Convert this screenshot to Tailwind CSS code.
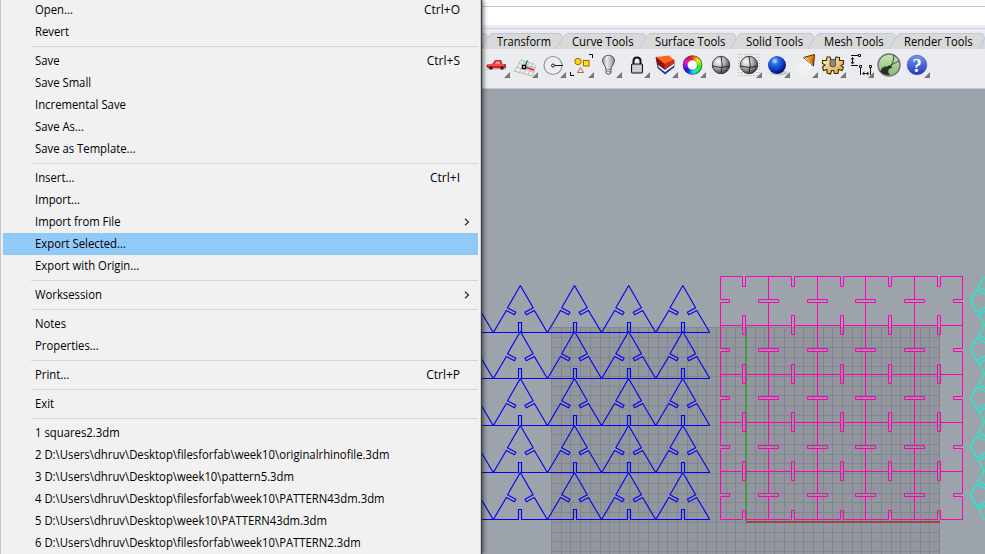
<!DOCTYPE html>
<html lang="en">
<head>
<meta charset="utf-8">
<title>Rhinoceros</title>
<script src="https://cdn.jsdelivr.net/npm/@tailwindcss/browser@4"></script>
</head>
<body class="w-[985px] h-[554px] overflow-hidden bg-[#9da3aa] font-['Open_Sans','Noto_Sans',sans-serif] text-[12px] text-black">
<div class="flex w-[985px] h-[554px] overflow-hidden">

  <nav class="relative z-10 w-[481px] h-[554px] shrink-0 bg-[#f1f1f1] border-l border-[#c3c3c3] border-r border-r-[#d0d0d0] shadow-[1px_0_1px_#3c4044,3px_0_4px_rgba(0,0,0,0.45)]">
    <ul id="menu" class="-mt-px flex flex-col pl-[2px] pr-[2px]"></ul>
  </nav>

  <main class="flex flex-col w-[504px] shrink-0">
    <div class="h-[6px] bg-white"></div>
    <div class="h-[19px] bg-white border-t border-[#bcc3d6]"></div>
    <div class="h-[3px] bg-[#ebecf0]"></div>
    <div class="relative h-[21px] bg-[#ebecf0] border-t border-[#cfd2e2]">
      <svg class="absolute left-0 -top-px" width="504" height="21" viewBox="481 28 504 21" fill="#d9d9d9" stroke="#bfc7da">
        <path d="M470 50V33.500H484Q487 33.500 487 37V50"/>
        <path d="M480 50L489 36Q490.500 33.500 493 33.500H559Q562 33.500 562 37V50"/>
        <path d="M555 50L564 36Q565.500 33.500 568 33.500H642Q645 33.500 645 37V50"/>
        <path d="M638 50L647 36Q648.500 33.500 651 33.500H732Q735.500 33.500 735.500 37V50"/>
        <path d="M729 50L738 36Q739.500 33.500 742 33.500H810Q813.500 33.500 813.500 37V50"/>
        <path d="M807 50L816 36Q817.500 33.500 820 33.500H892Q895 33.500 895 37V50"/>
        <path d="M888 50L897 36Q898.500 33.500 901 33.500H981Q984 33.500 984 37V50"/>
        <path d="M978 50L986 36"/>
      </svg>
      <div class="relative flex h-full items-end whitespace-nowrap leading-[14px] pl-[16px]">
        <div class="w-[75px]"><span class="inline-block origin-left scale-x-[0.92]">Transform</span></div>
        <div class="w-[83px]"><span class="inline-block origin-left scale-x-[0.94]">Curve Tools</span></div>
        <div class="w-[91px]"><span class="inline-block origin-left scale-x-[0.94]">Surface Tools</span></div>
        <div class="w-[78px]"><span class="inline-block origin-left scale-x-[0.95]">Solid Tools</span></div>
        <div class="w-[80px]"><span class="inline-block origin-left scale-x-[0.94]">Mesh Tools</span></div>
        <div class="w-[80px]"><span class="inline-block origin-left scale-x-[0.935]">Render Tools</span></div>
      </div>
    </div>
    <div class="flex h-[40px] bg-[#ebecf0] border-b border-[#bfc6d8] pl-px pt-px">
      <svg class="absolute w-0 h-0"><defs>
        <radialGradient id="gry" cx=".35" cy=".3" r=".75"><stop offset="0" stop-color="#fff"/><stop offset=".4" stop-color="#c4c4c4"/><stop offset="1" stop-color="#3a3a3a"/></radialGradient>
        <radialGradient id="blu" cx=".38" cy=".28" r=".75"><stop offset="0" stop-color="#d8ecff"/><stop offset=".25" stop-color="#2f74ea"/><stop offset=".65" stop-color="#0b3bbd"/><stop offset="1" stop-color="#020a50"/></radialGradient>
        <linearGradient id="hlp" x2="0" y2="1"><stop offset="0" stop-color="#7396f0"/><stop offset="1" stop-color="#2437bd"/></linearGradient>
        <linearGradient id="gld" x2="1" y2="1"><stop offset="0" stop-color="#fff3b8"/><stop offset="1" stop-color="#d9a23c"/></linearGradient>
        <linearGradient id="org" x2="1" y2=".6"><stop offset="0" stop-color="#ffc35a"/><stop offset=".6" stop-color="#f48a10"/><stop offset="1" stop-color="#a85500"/></linearGradient>
        <linearGradient id="blb" x2="1" y2="0"><stop offset="0" stop-color="#8a8a8a"/><stop offset=".35" stop-color="#eee"/><stop offset="1" stop-color="#888"/></linearGradient>
        <linearGradient id="grn" x2="0" y2="1"><stop offset="0" stop-color="#cbe6b8"/><stop offset="1" stop-color="#86b878"/></linearGradient>
        <linearGradient id="beam" x1="1" y1="0" x2="0" y2="1"><stop offset="0" stop-color="#fff"/><stop offset="1" stop-color="#ebecf0"/></linearGradient>
      </defs></svg>
      <!-- car -->
      <svg width="28" height="38" viewBox="0 50 28 38"><path d="M1 69.500H24" stroke="#d3d3d3"/><path d="M5 65L11 64L13 60.500H19L20 64.500H23.500V68H6Q4.500 67 5 65Z" fill="#e52222" stroke="#9d1212" stroke-width=".7"/><path d="M13 64L14 61.500H18V64Z" fill="#ff9a92"/><path d="M6 65H22" stroke="#ff756b"/><circle cx="9" cy="68" r="1.800" fill="#222"/><circle cx="20" cy="68" r="1.800" fill="#222"/><path d="M28 72V78H22Z" fill="#777"/></svg>
      <!-- construction plane -->
      <svg width="28" height="38" viewBox="0 50 28 38" fill="none"><path d="M11 60L24 64M9 63.500L26 68M7 67.500L25 72M4 71L22 76M11 60L4 72M15 61L9 73M19 62L13 74.500M23 63L18 75M26 65L22 76" stroke="#b6b6b6" stroke-width=".9"/><path d="M15 66L17.500 60.500" stroke="#15902a" stroke-width="1.400"/><path d="M15 67L24 70" stroke="#d52020" stroke-width="1.400"/><rect x="12.500" y="65.500" width="3" height="3" fill="#fff" stroke="#000" stroke-width="1.300"/><path d="M28 72V78H22Z" fill="#777"/></svg>
      <!-- circle -->
      <svg width="28" height="38" viewBox="0 50 28 38" fill="none"><circle cx="15" cy="65.500" r="9" stroke="#929292" stroke-width="1.100"/><path d="M15 65.500H25" stroke="#111"/><circle cx="15" cy="65.500" r="1.500" fill="#fff" stroke="#111"/><path d="M28 72V78H22Z" fill="#777"/></svg>
      <!-- selection -->
      <svg width="28" height="38" viewBox="0 50 28 38" fill="none"><path d="M23 54.500H26.500V58M4.500 72V75.500H8" stroke="#000"/><circle cx="12" cy="61.500" r="3.200" fill="#ffd800" stroke="#9a6a00"/><rect x="17.500" y="60.500" width="5.500" height="5.500" fill="#ffe600" stroke="#9a6a00"/><path d="M14.500 67.500L17.500 72.500H11.500Z" stroke="#a86a42"/><path d="M28 72V78H22Z" fill="#777"/></svg>
      <!-- bulb -->
      <svg width="28" height="38" viewBox="0 50 28 38"><path d="M12 69Q12 67 9.500 64Q7 60 10 57Q14.500 53.500 19 57Q22 60 19.500 64Q17 67 17 69V73Q14.500 76 12 73Z" fill="url(#blb)" stroke="#555" stroke-width="1"/><path d="M12 69.500H17M12 71.500H17" stroke="#777" stroke-width=".7"/><path d="M28 72V78H22Z" fill="#777"/></svg>
      <!-- lock -->
      <svg width="28" height="38" viewBox="0 50 28 38"><path d="M11.500 65V61Q11.500 57.500 15 57.500T18.500 61V65" fill="none" stroke="#111" stroke-width="2"/><rect x="9.500" y="64" width="11" height="9" rx=".5" fill="#bdbdbd" stroke="#111"/><path d="M11 66.500H19M11 68.500H19M11 70.500H19" stroke="#eee" stroke-width=".8"/><path d="M28 72V78H22Z" fill="#777"/></svg>
      <!-- layers -->
      <svg width="28" height="38" viewBox="0 50 28 38" stroke-linejoin="round"><path d="M6 57L14 63L24 60V67L15 74L8 68Z" fill="#1c3f9c" stroke="#1a2650" stroke-width=".8"/><path d="M8 64L15 70L24 63.500V65.500L15 72L8.500 67Z" fill="#fff"/><path d="M6 57L14.500 63V69.500L7.500 64.500Z" fill="#8a1008"/><path d="M6 57L19 55.500L24 60L14.500 64Z" fill="#ff6420"/><path d="M14.500 64L24 60V63.500L14.500 69.500Z" fill="#d92a12"/><path d="M28 72V78H22Z" fill="#777"/></svg>
      <!-- colour wheel -->
      <svg width="28" height="38" viewBox="0 50 28 38"><g fill="none" stroke-width="4"><circle cx="14.500" cy="65" r="8.600" stroke="#444" stroke-width="2.500"/><g id="wheel"></g></g><circle cx="14.500" cy="65" r="5" fill="#fff" stroke="#555" stroke-width=".6"/><path d="M28 72V78H22Z" fill="#777"/></svg>
      <!-- shaded sphere -->
      <svg width="28" height="38" viewBox="0 50 28 38"><circle cx="15" cy="65" r="8.700" fill="url(#gry)" stroke="#333" stroke-width=".9"/><path d="M6.500 66Q15 69 23.500 66M15 56.500Q17.500 65 15 73.500" fill="none" stroke="#222" stroke-width=".9"/></svg>
      <!-- ghosted sphere -->
      <svg width="28" height="38" viewBox="0 50 28 38"><path d="M4 54.500H26M4 57.500H26M4 60.500H26M4 63.500H26M4 66.500H26M4 69.500H26M4 72.500H26M4 75.500H26" stroke="#bbb" stroke-dasharray="1.500 1.500"/><circle cx="15" cy="65" r="8.700" fill="url(#gry)" stroke="#333" stroke-width=".9"/><path d="M6.500 66Q15 69 23.500 66M15 56.500Q17.500 65 15 73.500" fill="none" stroke="#222" stroke-width=".9"/><path d="M28 72V78H22Z" fill="#777"/></svg>
      <!-- rendered sphere -->
      <svg width="28" height="38" viewBox="0 50 28 38"><ellipse cx="17" cy="73" rx="9" ry="2.500" fill="#c7c8cc"/><circle cx="15" cy="65" r="9" fill="url(#blu)"/><path d="M28 72V78H22Z" fill="#777"/></svg>
      <!-- spotlight -->
      <svg width="28" height="38" viewBox="0 50 28 38"><path d="M14 58L2 70Q7 78 18 73L23 66Z" fill="url(#beam)" opacity=".6"/><path d="M13.500 57.500L24.500 54.500L23.500 66Z" fill="url(#org)" stroke="#4d2d00" stroke-width="1" stroke-linejoin="round"/><path d="M14.500 57.500L22.500 64.500" stroke="#ffe9b0" stroke-width="1" fill="none"/><path d="M28 72V78H22Z" fill="#777"/></svg>
      <!-- gear -->
      <svg width="28" height="38" viewBox="0 50 28 38"><path d="M9 57L12 57L13 60H17L18 57L21.500 57.500L21.500 60.500L25.500 60.500V64L23 65.500L25.500 67.500L24 70.500L20.500 69.500L20 73.500H16.500L15.500 70.500L13.500 70.500L12.500 74L9 73L9 69.500L5.500 70.500L4.500 67L7 65L4.500 63.500V60.500L8.500 60.500Z" fill="url(#gld)" stroke="#3f2803" stroke-width="1.100"/><path d="M12 59.500H17.500V66Q15 68 12 66Z" fill="#888" stroke="#444" stroke-width=".8"/><path d="M28 72V78H22Z" fill="#777"/></svg>
      <!-- dimensions -->
      <svg width="28" height="38" viewBox="0 50 28 38" fill="none" stroke="#111"><path d="M5 55.500H12M5 65.500H12M6.500 58V63M14.500 67V75M24.500 67V75M17 73.500H22"/><path d="M5 59.500L6.500 57.500L8 59.500M5 62L6.500 64L8 62M18.500 72L16.500 73.500L18.500 75M21 72L23 73.500L21 75" stroke-width=".9"/><path d="M12.500 54.500H14.500V56.500H12.500ZM13.500 65.500H15.500V67.500H13.500ZM23.500 65.500H25.500V67.500H23.500Z" fill="#fff"/><path d="M28 72V78H22Z" fill="#777" stroke="none"/></svg>
      <!-- grasshopper -->
      <svg width="28" height="38" viewBox="0 50 28 38"><circle cx="15" cy="65" r="11" fill="url(#grn)" stroke="#777" stroke-width="1.500"/><path d="M6 71L9 68L12 67L16 65L18.500 67.500L15 69L14 72L16 75Q9 75.500 6 71Z" fill="#272d25"/><path d="M17 66Q20 61 20 55M17 65L25 61M7 69L12 66" stroke="#272d25" fill="none" stroke-width=".8"/></svg>
      <!-- help -->
      <svg width="28" height="38" viewBox="0 50 28 38"><circle cx="15" cy="65" r="9.800" fill="url(#hlp)" stroke="#3949b5" stroke-width=".6"/><text x="15" y="71.500" text-anchor="middle" class="font-['Liberation_Serif',serif] font-bold text-[19px] fill-white">?</text><path d="M28 72V78H22Z" fill="#777"/></svg>
    </div>
    <svg id="view" class="block shrink-0" width="504" height="465" viewBox="481 89 504 465" fill="none">
      <rect x="551" y="327" width="389" height="230" fill="#92979f"/>
      <path id="grid" stroke="#83868e"/>
      <path d="M746 327V521" stroke="#4a9647" stroke-width="2"/>
      <path d="M746 522H940" stroke="#974a4d" stroke-width="2"/>
      <path id="tri" stroke="#0404f0" stroke-width="1.150"/>
      <path id="squares" stroke="#ff00b4"/>
      <path id="hex" stroke="#12f3d6" stroke-width="1.400"/>
    </svg>
  </main>
</div>

<script>
const items = [
  ['Open...','Ctrl+O'],['Revert'],0,
  ['Save','Ctrl+S'],['Save Small'],['Incremental Save'],['Save As...'],['Save as Template...'],0,
  ['Insert...','Ctrl+I'],['Import...'],['Import from File','>'],['Export Selected...'],['Export with Origin...'],0,
  ['Worksession','>'],0,['Notes'],['Properties...'],0,['Print...','Ctrl+P'],0,['Exit'],0,
  ['1 squares2.3dm'],
  ['2 D:\\Users\\dhruv\\Desktop\\filesforfab\\week10\\originalrhinofile.3dm'],
  ['3 D:\\Users\\dhruv\\Desktop\\week10\\pattern5.3dm'],
  ['4 D:\\Users\\dhruv\\Desktop\\filesforfab\\week10\\PATTERN43dm.3dm'],
  ['5 D:\\Users\\dhruv\\Desktop\\week10\\PATTERN43dm.3dm'],
  ['6 D:\\Users\\dhruv\\Desktop\\filesforfab\\week10\\PATTERN2.3dm']
];
const arrow = '<svg class="-mr-[10px]" width="6" height="8" viewBox="0 0 6 8"><path d="M1 .8L4.500 4L1 7.200" fill="none" stroke="#333" stroke-width="1.300"/></svg>';
document.getElementById('menu').innerHTML = items.map(i => {
  if (!i) return '<li class="h-[7px] pt-[3px] pl-[28px]"><div class="h-px bg-[#d5d5d5]"></div></li>';
  const right = !i[1] ? '' : i[1] === '>' ? arrow : `<span>${i[1]}</span>`;
  const bg = i[0] === 'Export Selected...' ? 'bg-[#91c9f7]' : '';
  return `<li class="flex h-[22px] items-center justify-between pl-[32px] pr-[18px] leading-[22px] whitespace-nowrap ${bg}"><span class="inline-block origin-left scale-x-[0.943]">${i[0]}</span>${right}</li>`;
}).join('');

const set = (id, d) => document.getElementById(id).setAttribute('d', d);

let g = '';
for (let k = 0; k <= 40; k++) g += `M${Math.round(551 + 9.7 * k) + .5} 327V554`;
for (let k = 0; k <= 23; k++) g += `M551 ${Math.round(327.4 + 9.72 * k) + .5}H940`;
set('grid', g);

let t = '';
for (const base of [332, 378, 425, 472, 519]) for (let c = 0; c < 5; c++) {
  const x = 466.2 + 54.15 * c, b = base + .5, a = b - 47;
  for (const s of [-1, 1])
    t += `M${x} ${a}L${x + s*12.8} ${a+22.3}L${x + s*4.6} ${a+26.8}L${x + s*6} ${a+29.300}L${x + s*14} ${a+25}L${x + s*27} ${b}`;
  const l = Math.round(x - 2) + .5;
  t += `M${x-27} ${b}H${l}V${b-10}H${l+3}V${b}H${x+27}`;
}
set('tri', t);

const X = [720,768,817,865,914,962], Y = [276,325,374,422,471,519];
const SX = [742,791,840,888,937], SY = [299,348,396,445,493];
let q = '';
Y.forEach((y, j) => {
  let p = 720.5;
  SX.forEach(s => {
    q += `M${p} ${y+.5}H${s+.5}`;
    if (j === 0) q += `V${y+10.5}H${s+3.5}V${y+.5}`;
    else if (j === 5) q += `V${y-8.5}H${s+3.5}V${y+.5}`;
    else q += `M${s+.5} ${y-9.5}H${s+3.5}V${y+9.5}H${s+.5}Z`;
    p = s + 3.5;
  });
  q += `M${p} ${y+.5}H963`;
});
X.forEach((x, j) => {
  let p = 276.5;
  SY.forEach(s => {
    q += `M${x+.5} ${p}V${s+.5}`;
    if (j === 0) q += `H${x+9.5}V${s+3.5}H${x+.5}`;
    else if (j === 5) q += `H${x-8.5}V${s+3.5}H${x+.5}`;
    else q += `M${x-9.5} ${s+.5}H${x+10.5}V${s+3.5}H${x-9.5}Z`;
    p = s + 3.5;
  });
  q += `M${x+.5} ${p}V519.5`;
});
set('squares', q);

let h = '';
for (let r = 0; r < 5; r++) {
  const y = 300.8 + 48.6 * r;
  for (const s of [-1, 1])
    h += `M970.3 ${y}L976.8 ${y+s*11}L986 ${y+s*6}M986 ${y+s*9.800}L978.500 ${y+s*13.700}L984.500 ${y+s*24.300}`;
}
set('hex', h);

const w = document.getElementById('wheel');
let seg = '';
for (let a = 0; a < 360; a += 15) {
  const p = d => { const r = d * Math.PI / 180; return `${14.5 + 7 * Math.sin(r)} ${65 - 7 * Math.cos(r)}`; };
  seg += `<path d="M${p(a)}A7 7 0 0 1 ${p(a + 17)}" stroke="hsl(${(a + 20) % 360} 95% 50%)"/>`;
}
w.innerHTML = seg;
</script>
</body>
</html>
